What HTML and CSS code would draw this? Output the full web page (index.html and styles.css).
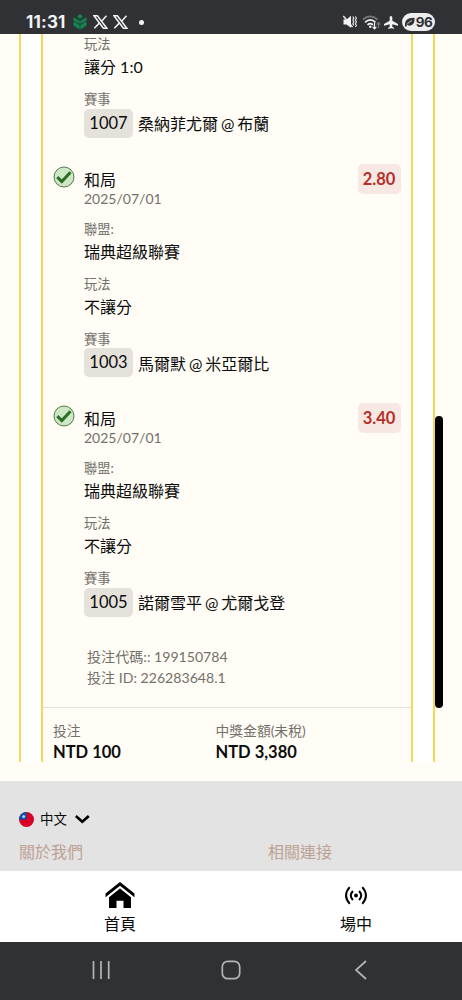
FILE: index.html
```html
<!DOCTYPE html>
<html lang="zh-Hant">
<head>
<meta charset="utf-8">
<title>投注記錄</title>
<link rel="stylesheet" href="styles.css">
</head>
<body>
<header class="status">
  <span class="clock">11:31</span>
  <svg class="leaf" width="14" height="16" viewBox="0 0 14 16"><path d="M7 0l3 2.500L7 5 4 2.500zM.5 3L6.700 7v3L.5 6.500zM13.500 3L7.300 7v3l6.200-3.500zM.5 7.200L6.700 11v4.800L.5 11.500zM13.500 7.200L7.300 11v4.800l6.200-4.300z" fill="#128550"/></svg>
  <svg class="xlogo" width="15" height="14" viewBox="0 0 15 14"><path d="M1 .8h3.400l9.400 12.400h-3.400zM13.500.8L8.600 6.200M6.300 8.100L1.300 13.200" fill="none" stroke="#f3f3f3" stroke-width="1.500"/></svg>
  <svg class="xlogo" width="15" height="14" viewBox="0 0 15 14"><path d="M1 .8h3.400l9.400 12.400h-3.400zM13.500.8L8.600 6.200M6.300 8.100L1.300 13.200" fill="none" stroke="#f3f3f3" stroke-width="1.500"/></svg>
  <i class="dot"></i>
  <svg class="mute" width="14" height="14" viewBox="0 0 14 14"><path d="M.5 4.500h3L8 .8v12L3.500 9.500h-3z" fill="#f3f3f3"/><path d="M.3 1L9.500 12" stroke="#f3f3f3" stroke-width="1.300"/><path d="M9.800 1.500l1 1.800-1 1.800 1 1.800-1 1.800 1 1.800M12.400 1.500l1 1.800-1 1.800 1 1.800-1 1.800 1 1.800-1 1.500" fill="none" stroke="#f3f3f3" stroke-width="1.100"/></svg>
  <svg class="wifi" width="19" height="15" viewBox="0 0 19 15"><g fill="none" stroke-width="1.700"><path d="M1 4.500Q8-1.800 15.500 4.500" stroke="#77797c"/><path d="M3 7.300Q8.300 2.500 13.500 7.300M5.500 9.900Q8.300 7.500 11 9.900" stroke="#f3f3f3"/><path d="M12.500 8v5.500M10.700 11.800l1.800 2 1.800-2" stroke="#f3f3f3" stroke-width="1.200"/><path d="M16.500 13V8M14.700 9.700l1.800-2 1.800 2" stroke="#77797c" stroke-width="1.200"/></g><circle cx="8.300" cy="11.800" r="1.300" fill="#f3f3f3"/></svg>
  <svg class="plane" width="14" height="13" viewBox="0 0 14 13"><path d="M5.700 1q1.300-1.800 2.600 0v3.800L14 8v1.700L8.300 8.300v2.400l1.800 1.300v.8L7 12.200l-3 .6V12l1.700-1.300V8.300L0 9.700V8l5.700-3.200z" fill="#f3f3f3"/></svg>
  <span class="battery"><svg width="10" height="10" viewBox="0 0 10 10"><path d="M0 9q-.5-6 4-7.500Q6 .8 9.500.7 10 8 5.500 8.500 3.500 9 2.600 7.700L.7 10z" fill="#2f3135"/><path d="M2 7.500Q4 4.500 7 3.500" stroke="#eee" stroke-width=".8" fill="none"/></svg>96</span>
</header>

<main class="page">
  <section class="card">
    <div class="slip">
      <article class="bet">
        <div class="mark"></div>
        <div class="info">
          <p class="label">玩法</p><p class="value">讓分 1:0</p>
          <p class="label">賽事</p><p class="match"><span class="tag">1007</span>桑納菲尤爾 @ 布蘭</p>
        </div>
      </article>
      <article class="bet">
        <svg class="mark" width="22" height="22" viewBox="0 0 22 22"><circle cx="11" cy="11" r="10" fill="#cce8c4" stroke="#55794e" stroke-width="1"/><path d="M4.300 11.200l4.500 4.300 8.700-9.200" fill="none" stroke="#2e6c25" stroke-width="3"/></svg>
        <div class="info">
          <p class="title">和局</p><p class="date">2025/07/01</p>
          <p class="label">聯盟:</p><p class="value">瑞典超級聯賽</p>
          <p class="label">玩法</p><p class="value">不讓分</p>
          <p class="label">賽事</p><p class="match"><span class="tag">1003</span>馬爾默 @ 米亞爾比</p>
        </div>
        <span class="odds">2.80</span>
      </article>
      <article class="bet">
        <svg class="mark" width="22" height="22" viewBox="0 0 22 22"><circle cx="11" cy="11" r="10" fill="#cce8c4" stroke="#55794e" stroke-width="1"/><path d="M4.300 11.200l4.500 4.300 8.700-9.200" fill="none" stroke="#2e6c25" stroke-width="3"/></svg>
        <div class="info">
          <p class="title">和局</p><p class="date">2025/07/01</p>
          <p class="label">聯盟:</p><p class="value">瑞典超級聯賽</p>
          <p class="label">玩法</p><p class="value">不讓分</p>
          <p class="label">賽事</p><p class="match"><span class="tag">1005</span>諾爾雪平 @ 尤爾戈登</p>
        </div>
        <span class="odds">3.40</span>
      </article>
      <div class="codes"><p>投注代碼:: 199150784</p><p>投注 ID: 226283648.1</p></div>
      <div class="totals">
        <div class="stake"><p class="label">投注</p><p class="amount">NTD 100</p></div>
        <div><p class="label">中獎金額(未稅)</p><p class="amount">NTD 3,380</p></div>
      </div>
    </div>
  </section>
  <i class="scrollbar"></i>
</main>

<footer class="footer">
  <div class="lang">
    <svg width="15" height="15" viewBox="0 0 15 15"><defs><clipPath id="flag"><circle cx="7.500" cy="7.500" r="7.500"/></clipPath></defs><g clip-path="url(#flag)"><path d="M0 0h15v15H0z" fill="#d80027"/><path d="M0 0h7.500v7.500H0z" fill="#0052b4"/></g><circle cx="4.600" cy="4.500" r="1.500" fill="#b9d4ee"/></svg>
    <span class="langname">中文</span>
    <svg width="15" height="9" viewBox="0 0 15 9"><path d="M.8 1l6.500 5.800L13.800 1" fill="none" stroke="#000" stroke-width="2.700"/></svg>
  </div>
  <div class="links"><span>關於我們</span><span>相關連接</span></div>
</footer>

<nav class="tabs">
  <div class="tab home"><svg width="30" height="27" viewBox="0 0 30 27"><path d="M15 0l14.500 11.400v3.800L15 3.800.5 15.200v-3.800z"/><path d="M15 6.500l11 8.700V26h-7.500v-7.200h-7V26H4V15.200z"/></svg><span>首頁</span></div>
  <div class="tab live"><svg width="24" height="27" viewBox="0 0 24 27"><circle cx="12" cy="13.500" r="1.900"/><path d="M8.900 9q-4.200 4.500 0 9M15.100 9q4.200 4.500 0 9M5.700 5.200q-7.300 8.300 0 16.600M18.300 5.200q7.300 8.300 0 16.600" fill="none" stroke="#000" stroke-width="2"/></svg><span>場中</span></div>
</nav>
<div class="sysnav">
  <svg width="20" height="20" viewBox="0 0 20 20"><path d="M2.500 1v18M10 1v18M17.700 1v18"/></svg>
  <svg width="20" height="20" viewBox="0 0 20 20"><rect x="1.300" y="1.300" width="17.400" height="17.400" rx="5.500"/></svg>
  <svg width="20" height="20" viewBox="0 0 20 20"><path d="M15 1L5 10l10 9"/></svg>
</div>
</body>
</html>
```
FILE: styles.css
```css
* { box-sizing: border-box; }
body { margin: 0; width: 462px; height: 1000px; overflow: hidden; background: #fffdf5; color: #0c0c0c; font-family: Lato, "Noto Sans CJK TC", sans-serif; font-size: 16px; }
p { margin: 0; white-space: nowrap; }
svg { display: block; flex: none; }

.status { height: 34px; background: #2f3135; display: flex; align-items: center; padding: 10px 27px 0 26px; color: #f3f3f3; }
.clock { width: 39px; font: bold 17px/22px Inter, sans-serif; letter-spacing: .2px; }
.leaf { margin-left: 8px; }
.xlogo { margin-left: 6px; }
.xlogo + .xlogo { margin-left: 5px; }
.dot { width: 5px; height: 5px; border-radius: 50%; background: #f3f3f3; margin-left: 11px; }
.mute { margin-left: auto; }
.wifi { margin-left: 5px; }
.plane { margin-left: 3px; }
.battery { display: flex; align-items: center; justify-content: center; gap: 1px; width: 33px; height: 18px; margin-left: 4px; border-radius: 9px; background: #eee; color: #2f3135; font: bold 13.500px/18px Inter, sans-serif; letter-spacing: -.6px; }

.page { height: 747px; display: flex; align-items: flex-start; padding-left: 19px; }
.card { width: 415.500px; height: 728px; padding: 0 20px; background: #fff; border: solid #f2da58; border-width: 0 2px; }
.slip { height: 728px; background: #fffdf5; border: solid #f2da58; border-width: 0 2px; padding-top: 1px; }
.scrollbar { width: 8px; height: 292px; margin-top: 382px; border-radius: 4px; background: #000; }

.bet { display: flex; align-items: flex-start; padding: 0 10px; margin-bottom: 30.500px; }
.mark { width: 22px; margin: -2px 9px 0 0; }
.info { flex: 1; }
.title { line-height: 23px; height: 22px; }
.date { height: 30px; font-size: 14px; line-height: 18px; color: #74716c; }
.label { font-size: 13.300px; line-height: 18px; color: #74716c; }
.value { height: 37px; line-height: 28px; }
.match { display: flex; align-items: center; height: 29px; padding-top: 1px; word-spacing: -1.200px; }
.tag { width: 49px; height: 29px; margin-right: 5px; border-radius: 5px; background: #e5e2dc; line-height: 29px; text-align: center; font-size: 16.500px; }
.odds { width: 43px; height: 30px; margin-top: -4px; border-radius: 5px; background: #f7e8e3; color: #b52f2a; font-size: 16.500px; font-weight: bold; line-height: 31px; text-align: center; }
.codes { margin-top: -1px; padding-left: 44px; font-size: 14.100px; line-height: 21px; color: #74716c; }
.totals { display: flex; margin-top: 19px; padding: 14px 10px 0; border-top: 1px solid #e3e1dc; }
.totals .label { font-size: 13.800px; }
.stake { width: 162.500px; }
.amount { font-size: 16.500px; font-weight: bold; line-height: 25px; }

.footer { height: 90px; padding: 28px 19px 0; background: #e3e3e3; }
.lang { display: flex; align-items: center; height: 20px; }
.langname { width: 35px; margin-left: 6px; font-size: 13.500px; line-height: 20px; }
.links { display: flex; margin-top: 11px; color: #bda294; line-height: 24px; }
.links span { flex: none; width: 249px; white-space: nowrap; }
.links span:last-child { width: auto; }

.tabs { height: 71px; display: flex; background: #fff; }
.tab { display: flex; flex-direction: column; flex: none; align-items: center; padding-top: 11px; line-height: 24px; }
.tab span { margin-top: 3px; }
.home { width: 240px; }
.live { width: 222px; padding-left: 10px; }
.sysnav { height: 58px; padding: 0 91px 2px; display: flex; justify-content: space-between; align-items: center; background: #2f3135; }
.sysnav svg { fill: none; stroke: #b4b5b7; stroke-width: 1.700; }
```
